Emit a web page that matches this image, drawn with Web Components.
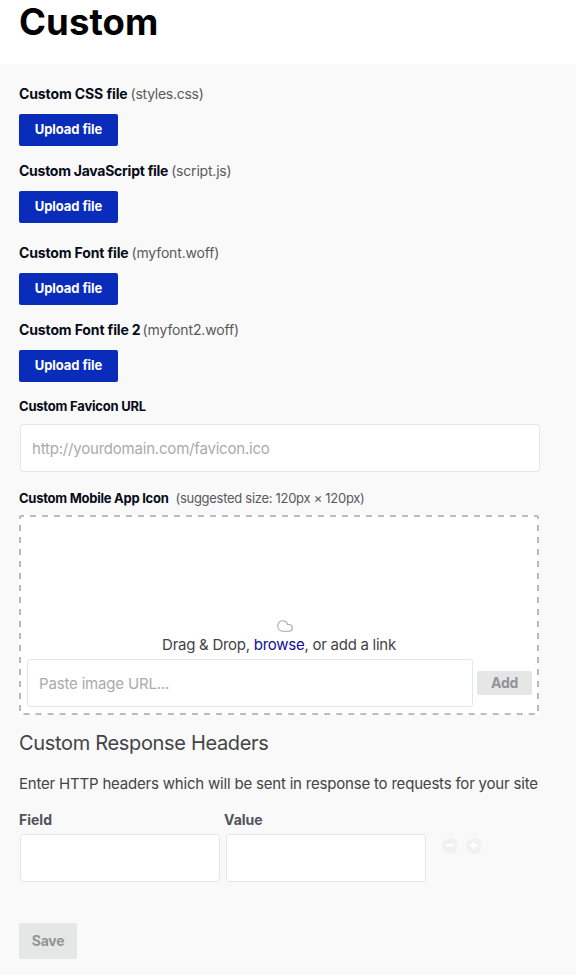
<!DOCTYPE html>
<html lang="en"><head><meta charset="utf-8"><title>Custom</title>
<style>
body{margin:0;background:#f9f9f9;font-family:Inter,"Liberation Sans",sans-serif;color:#424446}
</style></head><body>
<settings-page>
  <span slot="title" style="letter-spacing:.1px">Custom</span>
  <upload-field bold="Custom CSS file" bs="-.11px" note="(styles.css)" ns="-.26px" gap="3"></upload-field>
  <upload-field bold="Custom JavaScript file" bs="-.26px" note="(script.js)" ns="-.2px" gap="3" style="margin-bottom:18px"></upload-field>
  <upload-field bold="Custom Font file" bs="-.14px" note="(myfont.woff)" ns="-.16px" gap="3"></upload-field>
  <upload-field bold="Custom Font file 2" bs="-.13px" note="(myfont2.woff)" ns="-.13px" gap="2"></upload-field>
  <favicon-field></favicon-field>
  <icon-drop></icon-drop>
  <header-editor></header-editor>
  <app-button style="--w:58px;--h:36px;--bg:#e5e7e6;--fg:#929497;--fs:14px;--ls:-.3px;margin-top:41px">Save</app-button>
</settings-page>
<script>
const define=(name,render)=>customElements.define(name,class extends HTMLElement{
  connectedCallback(){if(!this.shadowRoot)this.attachShadow({mode:'open'}).innerHTML=render(this)}
});

define('app-button',()=>`<style>
:host{display:block;width:var(--w);flex:none}
button{display:block;width:100%;height:var(--h);padding:0 0 var(--lift,0px);border:0;border-radius:2px;background:var(--bg);color:var(--fg);font:700 var(--fs)/1 Inter,sans-serif;letter-spacing:var(--ls)}
</style><button><slot></slot></button>`);

define('text-box',e=>`<style>
:host{display:block;height:48px}
input{box-sizing:border-box;display:block;width:100%;height:48px;padding:0 11px;border:1px solid #e5e6e6;border-radius:3px;background:#fff;font:15px Inter,sans-serif;letter-spacing:var(--ls)}
input::placeholder{color:#a9abac;opacity:1}
</style><input placeholder="${e.getAttribute('hint')||''}">`);

define('upload-field',e=>`<style>
:host{display:block;margin-bottom:13px}
.l{display:flex;gap:${e.getAttribute('gap')}px;height:32px;align-items:flex-start;font-size:14px;line-height:24px;white-space:nowrap}
b{color:#060b18;letter-spacing:${e.getAttribute('bs')}}
span{color:#58595b;letter-spacing:${e.getAttribute('ns')}}
app-button{--w:99px;--h:32px;--lift:1px;--bg:#0a2cba;--fg:#fff;--fs:13px;--ls:-.08px}
</style><div class="l"><b>${e.getAttribute('bold')}</b><span>${e.getAttribute('note')}</span></div><app-button>Upload file</app-button>`);

define('favicon-field',()=>`<style>
:host{display:block;width:521px}
b{display:block;height:29px;font-size:13px;line-height:23px;letter-spacing:-.21px;color:#060b18}
text-box{margin-left:1px;--ls:-.2px}
</style><b>Custom Favicon URL</b><text-box hint="http://yourdomain.com/favicon.ico"></text-box>`);

define('icon-drop',()=>`<style>
:host{display:block;width:520px;margin-top:14px}
.l{display:flex;gap:7px;height:29px;font-size:13px;line-height:25px;white-space:nowrap}
b{color:#060b18;letter-spacing:-.26px}
.l span{color:#58595b;letter-spacing:-.29px}
.box{position:relative;box-sizing:border-box;height:200px;border-radius:3px;overflow:hidden;background:#fff;padding:0 7px 8px 8px;display:flex;flex-direction:column;justify-content:flex-end}
.edge{position:absolute;inset:0}
.cloud{display:block;margin:0 auto 1px;position:relative;left:5px}
p{margin:0;padding:0 1px 3px 0;font-size:15px;line-height:23px;text-align:center;white-space:pre;letter-spacing:-.27px;color:#424446}
a{color:#120d96;letter-spacing:-.24px}
.row{display:flex;gap:4px;align-items:center}
text-box{flex:1;--ls:-.17px}
app-button{--w:55px;--h:24px;--bg:#e5e7e6;--fg:#929497;--fs:14px;--ls:-.3px}
</style><div class="l"><b>Custom Mobile App Icon</b><span>(suggested size: 120px × 120px)</span></div>
<div class="box"><svg class="edge" width="520" height="200" fill="none" stroke="#bbb" stroke-width="2"><path d="M0 1H520" stroke-dasharray="6 6" stroke-dashoffset="1"/><path d="M1 0V200M519 0V200" stroke-dasharray="6 6" stroke-dashoffset="2"/><path d="M4.5 199H520" stroke-dasharray="6 6.03"/></svg>
<svg class="cloud" width="16" height="12" viewBox="0 0 16 12" fill="none" stroke="#a5a5a5" stroke-width="1.1"><path d="M5.5 11.2C2.8 11.2.7 9 .7 6.1.7 3.2 2.9.8 5.7.8c2.2 0 4 1.1 4.8 3.4.4.3 1.1.2 1.8.3 1.8.2 3 1.6 3 3.3 0 1.9-1.4 3.4-3.4 3.4z"/></svg>
<p>Drag &amp; Drop, <a>browse</a>, or add a link</p>
<div class="row"><text-box hint="Paste image URL..."></text-box><app-button>Add</app-button></div></div>`);

define('round-icon',e=>`<style>:host{display:block;width:16px;height:16px}svg{display:block}</style>
<svg width="16" height="16"><circle cx="8" cy="8" r="8" fill="#f1f1f1"/><path d="M3.5 7.3h8.5${e.hasAttribute('plus')?'M7.7 3v8.6':''}" stroke="#fff" stroke-width="2.2"/></svg>`);

define('header-editor',()=>`<style>
:host{display:block}
h2{margin:14px 0 0;font-size:20px;line-height:28px;font-weight:400;letter-spacing:-.33px}
p{margin:15px 0 0;font-size:15px;line-height:24px;letter-spacing:-.195px;white-space:nowrap}
.g{display:grid;grid-template-columns:205px 202px auto;margin-top:12px}
b{font-size:14px;line-height:24px;color:#505359}
.f{padding-top:2px;width:200px;margin-left:1px}
.v{margin-left:2px}
.i{display:flex;gap:8px;padding:6px 0 0 16px}
</style><h2>Custom Response Headers</h2>
<p>Enter HTTP headers which will be sent in response to requests for your site</p>
<div class="g"><b>Field</b><b>Value</b><span></span>
<text-box class="f"></text-box><text-box class="f v"></text-box><div class="i"><round-icon></round-icon><round-icon plus></round-icon></div></div>`);

define('settings-page',()=>`<style>
:host{display:block;height:975px;overflow:hidden}
header{height:64px;background:#fff}
h1{margin:0;padding-left:19px;font-size:36.5px;line-height:45px;font-weight:700;color:#000}
main{padding:18px 0 0 19px}
</style><header><h1><slot name="title"></slot></h1></header><main><slot></slot></main>`);
</script></body></html>
